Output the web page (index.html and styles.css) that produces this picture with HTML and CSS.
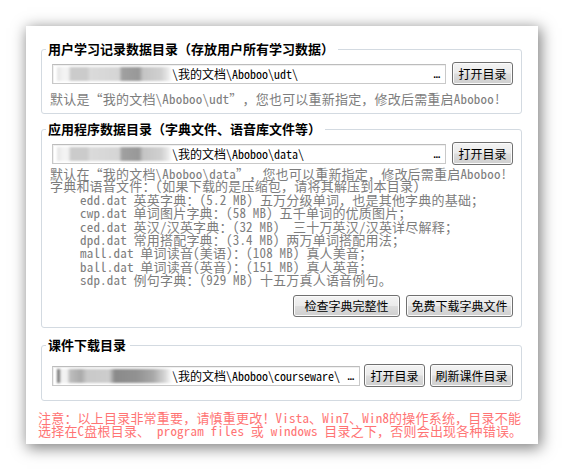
FILE: index.html
```html
<!DOCTYPE html>
<html lang="zh-CN">
<head>
<meta charset="utf-8">
<title>数据目录设置</title>
<link rel="stylesheet" href="styles.css">
</head>
<body>
<div class="panel">
  <fieldset class="group g1">
    <legend>用户学习记录数据目录（存放用户所有学习数据）</legend>
    <div class="row">
      <div class="path"><span class="blur b1"></span><span class="ptext">\我的文档\Aboboo\udt\</span><span class="dots">...</span></div>
      <button class="btn w61">打开目录</button>
    </div>
    <p class="hint">默认是<span class="q">“</span>我的文档\Aboboo\udt<span class="q">”</span>，您也可以重新指定，修改后需重启Aboboo!</p>
  </fieldset>

  <fieldset class="group g2">
    <legend>应用程序数据目录（字典文件、语音库文件等）</legend>
    <div class="row">
      <div class="path"><span class="blur b2"></span><span class="ptext">\我的文档\Aboboo\data\</span><span class="dots">...</span></div>
      <button class="btn w61">打开目录</button>
    </div>
    <div class="desc">默认在<span class="q">“</span>我的文档\Aboboo\data<span class="q">”</span>，您也可以重新指定，修改后需重启Aboboo!<br>字典和语音文件：(如果下载的是压缩包，请将其解压到本目录)</div>
    <div class="list">
      <div class="li">edd.dat 英英字典：(5.2 MB) 五万分级单词，也是其他字典的基础；</div>
      <div class="li">cwp.dat 单词图片字典：(58 MB) 五千单词的优质图片；</div>
      <div class="li">ced.dat 英汉/汉英字典：(32 MB)  三十万英汉/汉英详尽解释；</div>
      <div class="li">dpd.dat 常用搭配字典：(3.4 MB) 两万单词搭配用法；</div>
      <div class="li">mall.dat 单词读音(美语)：(108 MB) 真人美音；</div>
      <div class="li">ball.dat 单词读音(英音)：(151 MB) 真人英音；</div>
      <div class="li">sdp.dat 例句字典：(929 MB) 十五万真人语音例句。</div>
    </div>
    <div class="actions">
      <button class="btn w107 short">检查字典完整性</button>
      <button class="btn w107 short">免费下载字典文件</button>
    </div>
  </fieldset>

  <fieldset class="group g3">
    <legend>课件下载目录</legend>
    <div class="row r3">
      <div class="path"><span class="blur b3"></span><span class="ptext">\我的文档\Aboboo\courseware\</span><span class="dots">...</span></div>
      <button class="btn w61">打开目录</button>
      <button class="btn w83">刷新课件目录</button>
    </div>
  </fieldset>

  <p class="note">注意：以上目录非常重要，请慎重更改！Vista、Win7、Win8的操作系统，目录不能<br>选择在C盘根目录、 program files 或 windows 目录之下，否则会出现各种错误。</p>
</div>
</body>
</html>
```

FILE: styles.css
```css
html, body {
  margin: 0;
  padding: 0;
  background: #fff;
}

body {
  width: 564px;
  height: 471px;
  overflow: hidden;
  font-family: "Noto Sans CJK SC", sans-serif;
  color: #000;
  text-spacing-trim: space-all;
}

.panel {
  box-sizing: border-box;
  width: 512px;
  height: 418px;
  margin: 26px 0 0 26px;
  padding-top: 15px;
  background: #fff;
  box-shadow: 2px 3px 14px 1px rgba(0, 0, 0, 0.5);
}

.group {
  box-sizing: border-box;
  width: 481px;
  min-inline-size: 0;
  margin: 0 0 0 15px;
  padding: 5px 8px 7px 10px;
  border: 1px solid #d3dae1;
  border-radius: 3px;
}

.group legend {
  font: 700 13px/16px "Noto Sans CJK SC", sans-serif;
  color: #000;
  padding: 0 4px 0 2px;
  margin-left: -6px;
}

.g2 {
  margin-top: 7px;
  padding-bottom: 10px;
}

.g3 {
  margin-top: 9px;
  padding-top: 11px;
  padding-bottom: 13px;
}

.row {
  display: flex;
  align-items: center;
  gap: 6px;
  height: 23px;
}

.r3 {
  gap: 5px;
}

.r3 .path {
  margin-right: -1px;
}

.path {
  flex: 1;
  min-width: 0;
  box-sizing: border-box;
  height: 20px;
  display: flex;
  align-items: center;
  padding: 0 5px 0 4px;
  border: 1px solid #c9c9c9;
  border-top-color: #bcbcbc;
  background: #fff;
  box-shadow: inset 1px 1px 0 #f0f0f0;
  font-family: "Noto Sans Mono CJK SC", "Liberation Mono", "Noto Sans CJK SC", monospace;
  font-size: 12px;
  line-height: 14px;
  white-space: nowrap;
}

.blur {
  flex: none;
  display: block;
  width: 115px;
  height: 14px;
  filter: blur(1px);
}

.b1, .b2 {
  background: linear-gradient(90deg,
    #e4e4e4 0, #f3f3f3 6px, #f3f3f3 11px, #cbcbcb 14px, #cbcbcb 30px,
    #dadada 33px, #d5d5d5 62px, #a0a0a0 65px, #989898 82px, #c4c4c4 86px,
    #d0d0d0 104px, #e8e8e8 111px, #fff 115px);
}

.b3 {
  background: linear-gradient(90deg,
    #777 0, #777 2px, #f2f2f2 4px, #f2f2f2 10px, #bdbdbd 13px, #aaa 24px,
    #c9c9c9 30px, #cdcdcd 52px, #8a8a8a 58px, #929292 80px, #a8a8a8 96px,
    #d6d6d6 108px, #fff 115px);
}

.ptext {
  min-width: 0;
  overflow: hidden;
}

.dots {
  flex: none;
  margin-left: auto;
  padding-left: 4px;
  font: 700 10px/10px "Liberation Sans", sans-serif;
  letter-spacing: -0.5px;
  position: relative;
  top: 1px;
}

.btn {
  flex: none;
  box-sizing: border-box;
  height: 23px;
  padding: 0;
  border: 1px solid #707070;
  border-radius: 3px;
  background: linear-gradient(#f3f3f3 0%, #ebebeb 48%, #dddddd 52%, #cfcfcf 100%);
  box-shadow: inset 0 0 0 1px #fbfbfb;
  font: 12px/1 "Noto Sans CJK SC", sans-serif;
  color: #000;
}

.w61 { width: 61px; }
.w83 { width: 83px; }
.w107 { width: 107px; }
.short { height: 22px; }

.hint, .desc, .list, .note {
  font-family: "Noto Sans Mono CJK SC", "Liberation Mono", "Noto Sans CJK SC", monospace;
  font-size: 13px;
  letter-spacing: 0.2px;
}

.hint, .desc, .li, .note {
  white-space: pre;
}

.q {
  font-family: "Noto Sans CJK SC", sans-serif;
  font-feature-settings: "fwid" 1;
}

.hint {
  margin: 7px 0 0 -2px;
  line-height: 14px;
  color: #7d7d7d;
}

.desc {
  margin: 3px 0 0 -2px;
  line-height: 12px;
  color: #7d7d7d;
}

.list {
  margin: 1px 0 0 28px;
  line-height: 13.33px;
  color: #7d7d7d;
}

.actions {
  display: flex;
  justify-content: flex-end;
  gap: 6px;
  margin-top: 9px;
}

.note {
  margin: 10px 0 0 12px;
  line-height: 13px;
  color: #ff7474;
}
```
